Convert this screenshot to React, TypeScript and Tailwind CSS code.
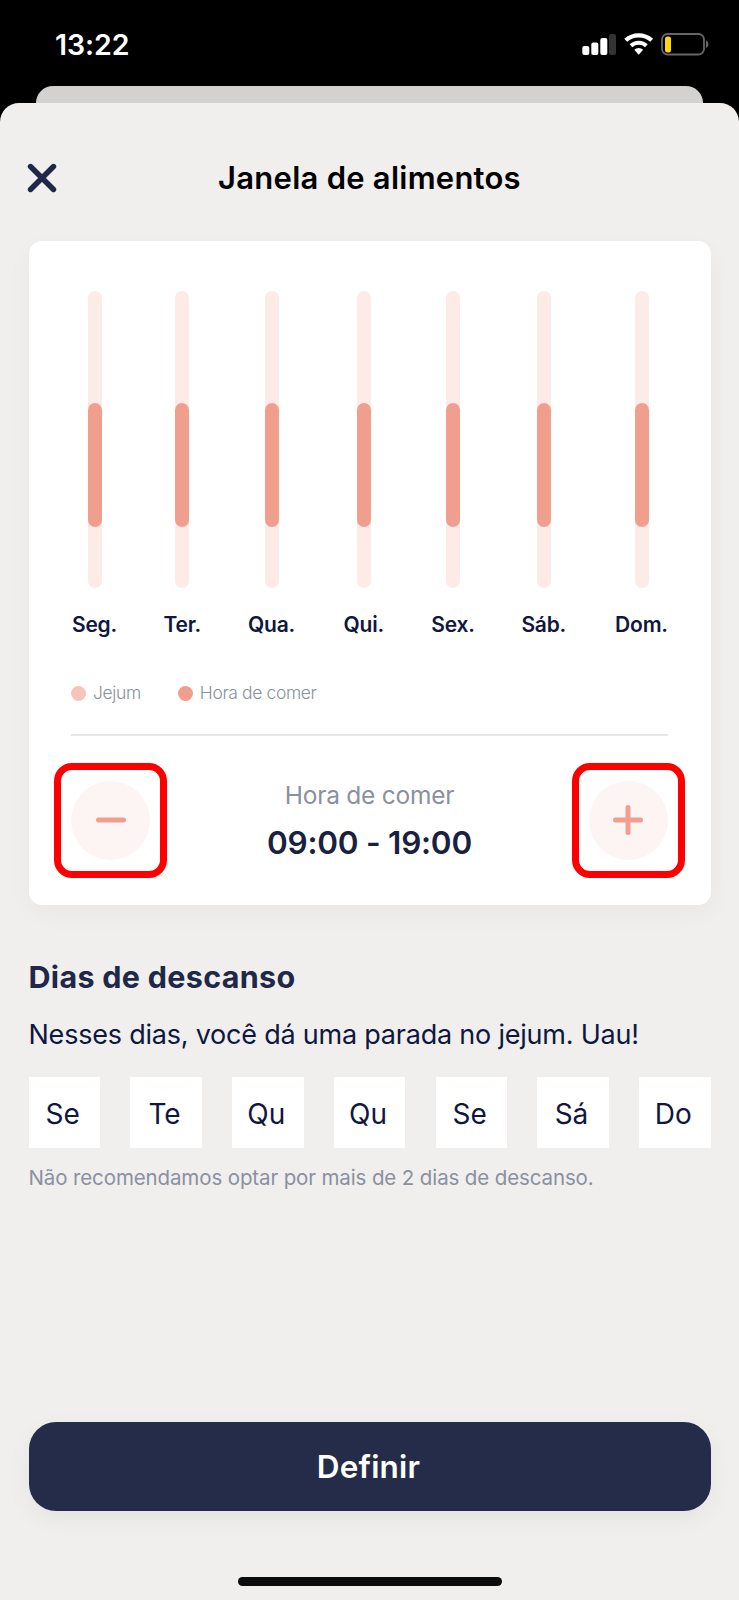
import type { ReactNode } from "react";

type Day = {
  label: string;
  short: string;
  width: string;
};

const DAYS: Day[] = [
  { label: "Seg.", short: "Se", width: "w-[47px]" },
  { label: "Ter.", short: "Te", width: "w-[34px]" },
  { label: "Qua.", short: "Qu", width: "w-[50px]" },
  { label: "Qui.", short: "Qu", width: "w-[40px]" },
  { label: "Sex.", short: "Se", width: "w-[44px]" },
  { label: "Sáb.", short: "Sá", width: "w-[43px]" },
  { label: "Dom.", short: "Do", width: "w-[58px]" },
];

function StatusBar() {
  return (
    <div className="flex h-[85.5px] shrink-0 items-start justify-between pr-[30px] pl-[55px] text-white">
      <span className="mt-[26.5px] text-[28.5px] leading-[36px] font-semibold tracking-[-0.1px]">13:22</span>
      <svg className="mt-[32px]" width="128" height="24" viewBox="0 0 128 24" fill="none">
        <rect x="1.3" y="14" width="7" height="9" rx="2" fill="#fff" />
        <rect x="10.3" y="10.5" width="7" height="12.5" rx="2" fill="#fff" />
        <rect x="19.3" y="6" width="7" height="17" rx="2" fill="#fff" />
        <rect x="28" y="2" width="7" height="21" rx="2" fill="#333" />
        <path d="M44.7 8.3a19.5 19.5 0 0 1 26 0" stroke="#fff" strokeWidth="4.2" />
        <path d="M50 13.8a11.3 11.3 0 0 1 15.4 0" stroke="#fff" strokeWidth="4" />
        <path d="M53.3 17.8a6.3 6.3 0 0 1 8.8 0L57.7 22.7z" fill="#fff" />
        <rect x="81" y="2" width="42" height="20.5" rx="5.5" stroke="#666" strokeWidth="1.8" />
        <rect x="84" y="4.5" width="6" height="16" rx="2.5" fill="#ffd60a" />
        <path d="M125 8.5c3.2 1 3.2 6.5 0 7.5z" fill="#666" />
      </svg>
    </div>
  );
}

function LegendItem({ color, children }: { color: string; children: ReactNode }) {
  return (
    <div className="flex items-center gap-[7px]">
      <span className={`size-[15px] rounded-full ${color}`} />
      <span className="text-[17.5px] leading-[24px] font-light tracking-[-0.38px] whitespace-nowrap text-[#8b90a1]">
        {children}
      </span>
    </div>
  );
}

function StepButton({ label, path }: { label: string; path: string }) {
  return (
    <div className="flex h-[115px] w-[113px] items-center justify-center rounded-[18px] border-[7px] border-[#ff0000]">
      <button aria-label={label} className="flex size-[79px] shrink-0 items-center justify-center rounded-full bg-[#fdf5f3]">
        <svg width="32" height="32" viewBox="0 0 32 32" fill="none" stroke="#f09f8f" strokeWidth="5" strokeLinecap="round">
          <path d={path} />
        </svg>
      </button>
    </div>
  );
}

function WindowCard() {
  return (
    <section className="mx-[28.5px] h-[664px] rounded-[13px] bg-white pt-[50px] shadow-[0_8px_28px_rgba(0,0,0,0.035)]">
      <div className="mr-[40px] ml-[42.5px] flex justify-between">
        {DAYS.map((day) => (
          <div key={day.label} className={`flex flex-col items-center ${day.width}`}>
            <div className="h-[297px] w-[14px] rounded-full bg-[#fdebe8] pt-[112px]">
              <div className="h-[124px] rounded-full bg-[#f09f8f]" />
            </div>
            <span className="mt-[22.5px] text-[21px] leading-[28px] font-semibold tracking-[-0.2px] whitespace-nowrap text-[#0f1740]">
              {day.label}
            </span>
          </div>
        ))}
      </div>

      <div className="mx-[42.5px] mt-[42.5px] flex gap-[37px]">
        <LegendItem color="bg-[#f6c4bb]">Jejum</LegendItem>
        <LegendItem color="bg-[#f09f8f]">Hora de comer</LegendItem>
      </div>

      <div className="mx-[42.5px] mt-[29px] h-[1.5px] bg-[#e7e7e9]" />

      <div className="mt-[27px] flex items-center justify-between px-[25.5px]">
        <StepButton label="Diminuir" path="M3.5 16h25" />
        <div className="flex flex-col items-center whitespace-nowrap">
          <span className="text-[24.5px] leading-[36px] tracking-[-0.25px] text-[#8b90a1]">Hora de comer</span>
          <span className="mt-[10px] text-[31.5px] leading-[40px] font-semibold tracking-[-0.25px] text-[#19213f]">
            09:00 - 19:00
          </span>
        </div>
        <StepButton label="Aumentar" path="M3.5 16h25M16 3.5v25" />
      </div>
    </section>
  );
}

function RestDays() {
  return (
    <section className="mx-[28.5px] mt-[52px] whitespace-nowrap">
      <h2 className="text-[30.5px] leading-[40px] font-bold tracking-[0.3px] text-[#1f2847]">Dias de descanso</h2>
      <p className="mt-[18px] text-[27px] leading-[40px] tracking-[-0.22px] text-[#0f1740]">
        Nesses dias, você dá uma parada no jejum. Uau!
      </p>
      <div className="mt-[22px] flex justify-between">
        {DAYS.map((day) => (
          <button key={day.label} className="h-[71px] w-[71.5px] bg-white pt-[2px] pr-[3px] text-[28px] text-[#0f1740]">
            {day.short}
          </button>
        ))}
      </div>
      <p className="mt-[15px] text-[20.5px] leading-[30px] tracking-[-0.12px] text-[#8b90a1]">
        Não recomendamos optar por mais de 2 dias de descanso.
      </p>
    </section>
  );
}

export default function App() {
  return (
    <div className="flex h-[1600px] w-[739px] flex-col overflow-hidden bg-black font-['Inter',sans-serif]">
      <StatusBar />
      <div className="mx-[36px] h-[17.5px] shrink-0 rounded-t-[17px] bg-[#d3d2d0]" />
      <main className="flex flex-1 flex-col rounded-t-[19px] bg-[#f0efed]">
        <header className="flex h-[138px] items-center px-[27px] pt-[12px]">
          <button aria-label="Fechar">
            <svg width="30" height="30" viewBox="0 0 30 30" fill="none" stroke="#1f2847" strokeWidth="5.4" strokeLinecap="round">
              <path d="M3.5 3.5l23 23M26.5 3.5l-23 23" />
            </svg>
          </button>
          <h1 className="flex-1 pr-[30px] pb-[1px] text-center text-[31px] leading-[40px] font-semibold tracking-[0.25px] text-black">
            Janela de alimentos
          </h1>
        </header>

        <WindowCard />
        <RestDays />

        <div className="mx-[28.5px] mt-auto flex flex-col items-center pb-[14px]">
          <button className="h-[89px] w-full rounded-[27px] bg-[#252c49] pr-[2px] text-[31.5px] font-semibold tracking-[0.2px] text-white shadow-[0_8px_24px_rgba(0,0,0,0.05)]">
            Definir
          </button>
          <div className="mt-[66px] h-[9px] w-[264px] rounded-full bg-[#0b0b0b]" />
        </div>
      </main>
    </div>
  );
}
